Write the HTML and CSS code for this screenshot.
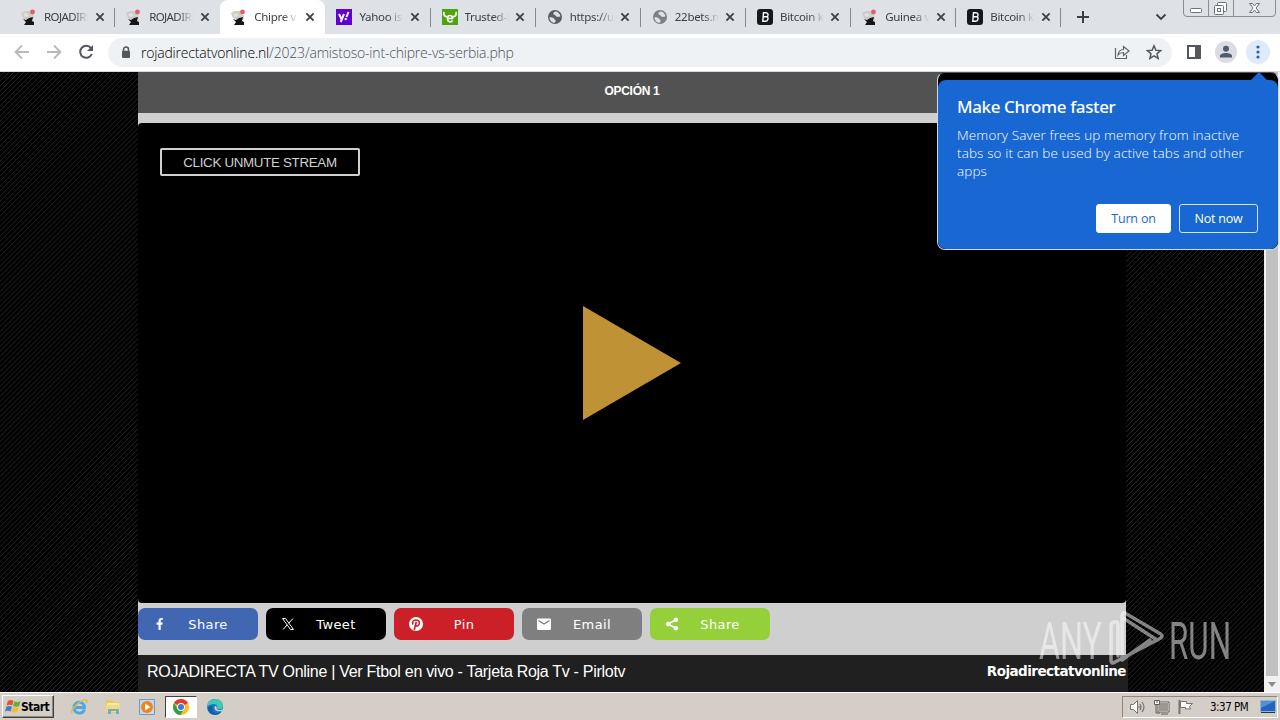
FILE: index.html
```
<!DOCTYPE html>
<html lang="en">
<head>
    <meta charset="UTF-8">
    <title>Chipre vs Serbia</title>
    <link rel="stylesheet" href="styles.css">
</head>
<body>
    <!-- Shared icons -->
    <svg class="defs" width="0" height="0">
        <symbol id="roja" viewBox="0 0 16 16">
            <path d="M0 4l4-2 6 0 2 6-5 3-5-2z" fill="#cfcac4"/>
            <path d="M2 5l4-1 2 3-4 1z" fill="#e4e0da"/>
            <path d="M9 6h4v4l-3 2-2-3z" fill="#d5d1cc"/>
            <circle cx="11.5" cy="3" r="2.4" fill="#d8636a"/>
            <path d="M2 10l3 1 3-2 4-1-1 4 2 1v3H3l2-3z" fill="#15171b"/>
        </symbol>
        <symbol id="close" viewBox="0 0 10 10">
            <path d="M1.4 1.4l7.2 7.2M8.6 1.4L1.4 8.6" stroke="#3c4046" stroke-width="1.8"/>
        </symbol>
        <symbol id="globe" viewBox="0 0 16 16">
            <circle cx="8" cy="8" r="7" fill="currentColor"/>
            <path d="M2.4 8.2c2 .2 4 .1 4.800 1.600.4 1.200 1.600.8 1.500 2.100-.1.900-1 1.300-1.500 2C4.500 13.300 2.400 11 2.400 8.200zM8 2.600c-.5 1-1.800 1-1.700 2.100.2 1.400 2 .8 2.500 2 .6 1.300 2.700 1.600 4.600.6C13 4.600 10.800 2.400 8 2.600z" fill="#dee1e6"/>
        </symbol>
        <symbol id="bitcoin" viewBox="0 0 16 16">
            <rect width="16" height="16" rx="3" fill="#17191d"/>
            <path d="M6.500 3.700h2.600c2.600 0 2.500 3.700.6 4 2.200.4 1.500 4.500-1 4.500H5.800L6.500 3.700zM6.500 7.800h3" fill="none" stroke="#fff" stroke-width="1.400"/>
        </symbol>
    </svg>

    <div class="tabstrip">
        <div class="tab"><svg class="fav"><use href="#roja"/></svg><span class="name caps">ROJADIRE</span><svg class="x"><use href="#close"/></svg></div>
        <div class="tab no-line"><svg class="fav"><use href="#roja"/></svg><span class="name caps">ROJADIRE</span><svg class="x"><use href="#close"/></svg></div>
        <div class="tab current"><svg class="fav"><use href="#roja"/></svg><span class="name">Chipre vs</span><svg class="x"><use href="#close"/></svg></div>
        <div class="tab"><svg class="fav" viewBox="0 0 16 16"><rect width="16" height="16" fill="#5f01d1"/><path d="M3 5l2.500 5M8 5l-3.300 8M12.500 3l-2 5" stroke="#fff" stroke-width="2" fill="none"/><circle cx="9.700" cy="10" r="1.200" fill="#fff"/></svg><span class="name">Yahoo is</span><svg class="x"><use href="#close"/></svg></div>
        <div class="tab"><svg class="fav" viewBox="0 0 16 16"><rect width="16" height="16" fill="#4fa30f"/><path d="M2 3c-1 3 1 5 3.500 4.500M14 3c1 3-1 5-3.500 4.500" stroke="#fff" stroke-width="1.800" fill="none"/><path d="M5.500 9.500h5c0-4-5-4-5 0 0 4 4 4 5 2" stroke="#fff" stroke-width="1.700" fill="none"/></svg><span class="name">Trusted-R</span><svg class="x"><use href="#close"/></svg></div>
        <div class="tab"><svg class="fav dark"><use href="#globe"/></svg><span class="name">https://ur</span><svg class="x"><use href="#close"/></svg></div>
        <div class="tab"><svg class="fav light"><use href="#globe"/></svg><span class="name">22bets.m</span><svg class="x"><use href="#close"/></svg></div>
        <div class="tab"><svg class="fav"><use href="#bitcoin"/></svg><span class="name">Bitcoin ka</span><svg class="x"><use href="#close"/></svg></div>
        <div class="tab"><svg class="fav"><use href="#roja"/></svg><span class="name">Guinea vs</span><svg class="x"><use href="#close"/></svg></div>
        <div class="tab"><svg class="fav"><use href="#bitcoin"/></svg><span class="name">Bitcoin ka</span><svg class="x"><use href="#close"/></svg></div>
        <svg class="plus" viewBox="0 0 14 14"><path d="M7 1v12M1 7h12" stroke="#3c4046" stroke-width="2"/></svg>
        <svg class="chevron" viewBox="0 0 12 8"><path d="M1.500 1.500L6 6l4.500-4.500" stroke="#3c4046" stroke-width="1.800" fill="none"/></svg>
        <svg class="winctl" viewBox="0 0 94 18">
            <path d="M.5 0v13q0 3.500 3.500 3.500h85q3.500 0 3.500-3.500V0M25.500 0v16M50.500 0v16" fill="none" stroke="#898d94"/>
            <g fill="#fff" stroke="#6b6f76"><rect x="7.500" y="8.500" width="11" height="4" rx="1"/><rect x="34.500" y="2.500" width="9" height="9" rx="1"/><rect x="31.500" y="5.500" width="9" height="9" rx="1"/><rect x="34.500" y="8.500" width="3" height="3"/>
            <path d="M66.500 3.500h3l2 2.500 2-2.500h3l-3.500 4.500 3.500 4.500h-3l-2-2.500-2 2.500h-3l3.500-4.500z"/></g>
        </svg>
    </div>

    <div class="toolbar">
        <svg class="arrow" viewBox="0 0 16 16"><path d="M15 8H2M8 1.500L1.500 8 8 14.500" fill="none" stroke="#b6b9bd" stroke-width="1.800"/></svg>
        <svg class="arrow" viewBox="0 0 16 16"><path d="M1 8h13M8 1.500L14.500 8 8 14.500" fill="none" stroke="#b6b9bd" stroke-width="1.800"/></svg>
        <svg class="arrow" viewBox="0 0 16 16"><path d="M13 4.200A6 6 0 1 0 13.800 10" fill="none" stroke="#54585d" stroke-width="2"/><path d="M15 1v6H9z" fill="#54585d"/></svg>
        <div class="omnibox">
            <svg class="lock" viewBox="0 0 10 13"><path d="M2.500 5V3.500a2.500 2.500 0 0 1 5 0V5" fill="none" stroke="#54585d" stroke-width="1.500"/><rect x="1" y="4.700" width="8" height="7.300" rx="1" fill="#54585d"/></svg>
            <span class="url"><b>rojadirectatvonline.nl</b>/2023/amistoso-int-chipre-vs-serbia.php</span>
            <svg class="share-ico" viewBox="0 0 16 16"><path d="M1.500 4v10.500h11V11M4 11c.5-4 2.500-5.500 5.500-5.500v-3L15 7l-5.500 4.500V8.500C7 8.500 5.500 9 4 11z" fill="none" stroke="#5f6368" stroke-width="1.200"/></svg>
            <svg class="star" viewBox="0 0 16 16"><path d="M8 1.800l1.900 4.400 4.700.4-3.600 3.100 1.100 4.700L8 11.900l-4.100 2.500L5 9.700 1.400 6.600l4.700-.4z" fill="none" stroke="#54585d" stroke-width="1.500"/></svg>
        </div>
        <svg class="panel" viewBox="0 0 14 14"><path d="M0 0h14v14H0zM2 2v10h6V2z" fill="#54585d" fill-rule="evenodd"/></svg>
        <svg class="round" viewBox="0 0 22 22"><circle cx="11" cy="11" r="11" fill="#dadce0"/><circle cx="11" cy="7.800" r="3" fill="#505a70"/><path d="M5 16.500v-1.500c0-4 12-4 12 0v1.500z" fill="#505a70"/></svg>
        <svg class="menu" viewBox="0 0 24 24"><circle cx="12" cy="12" r="12" fill="#dfebfb"/><g fill="#2862b8"><circle cx="12" cy="7" r="1.600"/><circle cx="12" cy="12" r="1.600"/><circle cx="12" cy="17" r="1.600"/></g></svg>
    </div>

    <div class="viewport">
        <div class="site">
            <div class="options">OPCIÓN 1</div>
            <div class="player">
                <button class="unmute">CLICK UNMUTE STREAM</button>
                <svg class="play" viewBox="0 0 98 114"><path d="M0 0l98 57-98 57z" fill="#bf9235"/></svg>
            </div>
            <div class="share">
                <a class="btn facebook"><svg viewBox="0 0 16 16"><path d="M6.500 14V8.800H4.600V6.500h1.900V5c0-2.200 1.200-3.200 4.200-2.900v2H9.500c-.8 0-.8.400-.8 1v1.400h2L10.400 8.800H8.700V14z"/></svg><span>Share</span></a>
                <a class="btn twitter"><svg viewBox="0 0 16 16"><path d="M2.500 2.500h3l8 11h-3zM13 2.500L8.700 7.200M7.200 8.900L3 13.500" fill="none" stroke="#fff"/></svg><span>Tweet</span></a>
                <a class="btn pinterest"><svg viewBox="0 0 16 16"><circle cx="8" cy="8" r="7"/><path d="M4.800 8.500C3.300 3 11.500 2.700 11.400 7c-.1 3-2.700 3.900-3.700 2.400M8.300 5.800L6.200 14" fill="none" stroke="#cc2029" stroke-width="1.600"/></svg><span>Pin</span></a>
                <a class="btn email"><svg viewBox="0 0 16 16"><rect x="1" y="2.500" width="14" height="11.500" rx="1.200"/><path d="M2.500 4.500L8 8l5.500-3.500" fill="none" stroke="#7f7f7f" stroke-width="1.400"/></svg><span>Email</span></a>
                <a class="btn sharethis"><svg viewBox="0 0 16 16"><path d="M12 3.800L4 8l8 4.200" fill="none" stroke="#fff" stroke-width="1.600"/><circle cx="12" cy="3.800" r="2.200"/><circle cx="4" cy="8" r="2.200"/><circle cx="12" cy="12.200" r="2.200"/></svg><span>Share</span></a>
            </div>
            <div class="footer">
                <span class="tagline">ROJADIRECTA TV Online | Ver Ftbol en vivo - Tarjeta Roja Tv - Pirlotv</span>
                <span class="brand">Rojadirectatvonline</span>
            </div>
        </div>
        <div class="scrollbar"><div class="thumb"></div><div class="down"></div></div>

        <svg class="watermark" viewBox="0 0 200 64">
            <g fill="#fff" font-family="Roboto" font-size="52">
                <text x="4" y="53" textLength="63" lengthAdjust="spacingAndGlyphs">ANY</text>
                <text x="134" y="53" textLength="62" lengthAdjust="spacingAndGlyphs">RUN</text>
            </g>
            <path d="M83 50V18q0-3-4-2-3 1-3 4v34q0 5 4 2l44-23q6-3 0-6L90 7q-3-1-3 3v44M88 12l34 22M87 54l28-20" fill="none" stroke="#fff" stroke-width="3.500" stroke-linecap="round"/>
        </svg>

        <div class="popup">
            <div class="bubble">
                <h1>Make Chrome faster</h1>
                <p>Memory Saver frees up memory from inactive<br>tabs so it can be used by active tabs and other<br>apps</p>
                <div class="actions">
                    <button class="on">Turn on</button>
                    <button class="not-now">Not now</button>
                </div>
            </div>
        </div>
    </div>

    <div class="taskbar">
        <div class="start">
            <svg viewBox="0 0 16 16"><path d="M2 2q3-2 6 0L6.500 7q-3-1.500-6 0z" fill="#e2532b"/><path d="M9 2.500q3 1.500 6.500 0L14 7.500q-3 1.500-6.500 0z" fill="#65ad3b"/><path d="M.4 8.200q3-1.500 6 0l-1.500 5q-3-1.500-6 0z" fill="#3e7ed0"/><path d="M7.300 8.700q3 1.500 6.500 0l-1.500 5q-3 1.500-6.500 0z" fill="#f4bd28"/></svg>
            <span>Start</span>
        </div>
        <svg class="app" viewBox="0 0 18 18"><path d="M14.500 11.500C12.500 17 4 16 4 9.500 4 2.500 14.500 2.500 14.500 9.500H5" fill="none" stroke="#48a9e4" stroke-width="2.800"/><path d="M2 15.500c-3-3 9-14.500 14-13.500 1.500.4 1 2 .4 3" fill="none" stroke="#e5b63e" stroke-width="1.400"/></svg>
        <svg class="app" viewBox="0 0 18 18"><path d="M2 4V2h6l1 2h6v11H2z" fill="#e9c95d"/><path d="M3 5h12v8H3z" fill="#faebac"/><path d="M2 7h14v7H2z" fill="#f4da7c"/><path d="M4 16v-5h11v5h-3v-3H7v3z" fill="#66afd7"/></svg>
        <svg class="app" viewBox="0 0 18 18"><path d="M1.500 1.500h15v15h-15z" fill="#c2d9ec" stroke="#6b9dc7"/><circle cx="9" cy="9" r="6" fill="#ef8519"/><path d="M7 5.500L12.500 9 7 12.500z" fill="#fff"/></svg>
        <div class="running">
            <svg viewBox="0 0 16 16"><circle cx="8" cy="8" r="8" fill="#fbc116"/><path d="M8 8L1.100 4A8 8 0 0 1 14.900 4z" fill="#df3b30"/><path d="M8 8L4.500 10 1.100 4A8 8 0 0 0 7.500 16l3.300-6z" fill="#2f9e4e"/><circle cx="8" cy="8" r="3.900" fill="#fff"/><circle cx="8" cy="8" r="3" fill="#3b79e1"/></svg>
        </div>
        <svg class="app edge" viewBox="0 0 18 18"><circle cx="9" cy="9" r="8" fill="#1976c9"/><path d="M1 9C1-1 17-2 17 8c0 4-6 4-6 2 2-4-5-6-10-1z" fill="#40c9b4"/><path d="M7 9c-2 4 2 8 8 5-3 4-12 4-13-3 0-3 4-4 5-2z" fill="#125ca9"/><path d="M9 8c2 0 2 1 1.500 2 .5 3 5 2 6 1l-.5 2c-5 1-9-1-7-5z" fill="#d6d0c8"/></svg>
        <div class="tray">
            <svg class="t-vol" viewBox="0 0 18 16"><path d="M1.500 5.500h3l4-4v13l-4-4h-3z" fill="#fff" stroke="#77736d"/><path d="M11 5q2 3 0 6M13 3q4 5 0 10M10 7v2" fill="none" stroke="#77736d" stroke-width="1.200"/></svg>
            <svg class="t-net" viewBox="0 0 18 16"><path d="M5.500 3.500h10v9h-10z" fill="#9b9892" stroke="#fff"/><path d="M5 3h11v10H5zM8 15h7M3 6v8h4" fill="none" stroke="#5f5c56"/><path d="M1.500 1.500h5v4h-5zM4 1v3" fill="#fff" stroke="#5f5c56"/></svg>
            <svg class="t-flag" viewBox="0 0 18 16"><path d="M2.500 1v14" stroke="#77736d" stroke-width="2"/><path d="M3.500 2.500h6v2h6l-3 3 1 2.500H8.500V8.500h-5z" fill="#fff" stroke="#77736d"/></svg>
            <span>3:37 PM</span>
            <svg class="t-desk" viewBox="0 0 16 14"><path d="M.5.500h15v11H.5z" fill="#2465b8" stroke="#8bb6dc"/><path d="M1 1h14L1 8z" fill="#4f91d6"/><path d="M1 12h14v1H1z" fill="#28354b"/></svg>
        </div>
    </div>
</body>
</html>
```
FILE: styles.css
```
* {
    margin: 0;
    padding: 0;
    box-sizing: border-box;
}

body {
    display: flex;
    flex-direction: column;
    width: 1280px;
    height: 720px;
    overflow: hidden;
    font-family: "Noto Sans", "Open Sans", sans-serif;
}

svg {
    flex: none;
    display: block;
}

.defs {
    position: absolute;
}

/* Tabs */
.tabstrip {
    display: flex;
    height: 34px;
    padding-left: 10px;
    background: #dee1e6;
}

.tab {
    position: relative;
    display: flex;
    align-items: center;
    width: 105.15px;
    height: 34px;
    padding-left: 11px;
    flex: none;
}

.tab::after {
    content: "";
    position: absolute;
    right: 0;
    top: 8px;
    width: 1px;
    height: 19px;
    background: #868a90;
}

.no-line::after,
.current::after {
    display: none;
}

.current {
    background: #fff;
    border-radius: 8px 8px 0 0;
}

.fav {
    width: 16px;
    height: 16px;
}

.dark {
    color: #5b5f65;
}

.light {
    color: #7d8085;
}

.name {
    width: 44px;
    margin: -2px 0 0 7px;
    overflow: hidden;
    white-space: nowrap;
    font-size: 11.5px;
    letter-spacing: -0.3px;
    color: #3c4046;
    -webkit-mask-image: linear-gradient(to right, #000 65%, transparent);
    mask-image: linear-gradient(to right, #000 65%, transparent);
}

.caps {
    letter-spacing: -0.6px;
}

.x {
    width: 10px;
    height: 10px;
    margin-left: 6.5px;
}

.plus {
    width: 14px;
    height: 14px;
    margin: 10px 0 0 14.5px;
}

.chevron {
    width: 12px;
    height: 8px;
    margin: 13px 0 0 65px;
}

.winctl {
    width: 94px;
    height: 18px;
    margin-left: 16px;
}

/* Toolbar */
.toolbar {
    display: flex;
    align-items: center;
    height: 38px;
    padding: 0 9px 1px 14px;
    border-bottom: 1px solid #d5d7da;
    background: #fff;
}

.arrow {
    width: 16px;
    height: 16px;
    margin-right: 16px;
}

.omnibox {
    display: flex;
    align-items: center;
    width: 1064px;
    height: 29px;
    margin-left: -2px;
    padding: 0 10px 0 13px;
    border-radius: 15px;
    background: #eff2f5;
}

.lock {
    width: 10px;
    height: 13px;
}

.url {
    flex: 1;
    margin-left: 10px;
    font-family: "Open Sans", "Noto Sans", sans-serif;
    font-size: 14px;
    font-weight: 300;
    letter-spacing: -0.19px;
    color: #4c5055;
    white-space: nowrap;
}

.url b {
    font-weight: 300;
    color: #000;
}

.share-ico {
    width: 16px;
    height: 16px;
    margin-right: 16px;
}

.star {
    width: 16px;
    height: 16px;
}

.panel {
    width: 14px;
    height: 14px;
    margin-left: 15px;
}

.round {
    width: 22px;
    height: 22px;
    margin-left: 14px;
}

.menu {
    width: 24px;
    height: 24px;
    margin-left: 9px;
}

/* Page */
.viewport {
    position: relative;
    display: flex;
    height: 620px;
    padding-left: 138px;
    background: repeating-linear-gradient(135deg, #000 0, #000 2.3px, #2a2a2a 2.9px, #000 3.54px);
}

.site {
    display: flex;
    flex-direction: column;
    width: 988px;
    background: #cfcfcf;
}

.options {
    height: 41px;
    margin-bottom: 10px;
    background: #525252;
    color: #fff;
    font: bold 12px/38px "Liberation Sans", sans-serif;
    letter-spacing: -0.3px;
    text-align: center;
}

.player {
    display: flex;
    flex-direction: column;
    height: 480px;
    padding: 25px 22px;
    border-radius: 4px;
    background: #000;
}

.unmute {
    width: 200px;
    height: 28px;
    border: 2px solid #d0d0d0;
    border-radius: 2px;
    background: #000;
    color: #d0d0d0;
    font: 13.333px "Liberation Sans", sans-serif;
    letter-spacing: -0.3px;
}

.play {
    width: 98px;
    height: 114px;
    margin: 130px 0 0 423px;
}

.share {
    display: flex;
    gap: 8px;
    height: 52px;
    padding-top: 5px;
}

.btn {
    display: flex;
    align-items: center;
    width: 120px;
    height: 32px;
    padding: 0 10px 0 14px;
    border-radius: 7px;
    color: #fff;
    font: 13px/32px "DejaVu Sans", sans-serif;
    letter-spacing: 0.4px;
}

.btn svg {
    width: 16px;
    height: 16px;
    fill: #fff;
}

.btn span {
    flex: 1;
    padding-top: 2px;
    text-align: center;
}

.facebook { background: #4267b2; }
.twitter { background: #000; }
.pinterest { background: #cc2029; }
.email { background: #7f7f7f; }
.sharethis { background: #95d03a; }

.footer {
    display: flex;
    justify-content: space-between;
    width: 990px;
    height: 37px;
    padding: 0 2px 0 9px;
    background: #202020;
    color: #fff;
    line-height: 33px;
}

.tagline {
    font-family: "Liberation Sans", sans-serif;
    font-size: 16px;
    letter-spacing: -0.29px;
}

.brand {
    font-family: "DejaVu Sans", sans-serif;
    font-size: 13.5px;
    font-weight: bold;
    letter-spacing: -0.53px;
}

.scrollbar {
    width: 16px;
    height: 620px;
    margin-left: 138px;
    padding-left: 2px;
    background: #f1f1f1;
}

.thumb {
    width: 12px;
    height: 604px;
    background: #c1c1c1;
}

.down {
    width: 0;
    margin: 6px 0 0 2px;
    border: 4px solid transparent;
    border-top: 5px solid #8b8b8b;
}

.watermark {
    position: absolute;
    left: 1035px;
    top: 534px;
    width: 200px;
    height: 64px;
    opacity: 0.5;
}

/* Memory saver popup */
.popup {
    position: absolute;
    left: 937px;
    top: 0;
    width: 342px;
    height: 178px;
    padding-top: 7px;
    border: 1px solid #c9d9e8;
    border-top-color: #555;
    border-radius: 8px;
    background: #000;
}

.popup::before {
    content: "";
    position: absolute;
    left: 313px;
    top: -1px;
    border: 8px solid transparent;
    border-top: 0;
    border-bottom-color: #1967d2;
}

.bubble {
    height: 169px;
    padding: 17px 20px 0 19px;
    border-radius: 8px;
    background: #1967d2;
    color: #fff;
}

.bubble h1 {
    font-size: 17px;
    font-weight: 500;
    line-height: 20px;
    letter-spacing: -0.4px;
}

.bubble p {
    margin-top: 9px;
    font-family: "Open Sans", "Noto Sans", sans-serif;
    font-size: 13.5px;
    font-weight: 300;
    line-height: 18px;
    letter-spacing: 0.13px;
    white-space: nowrap;
}

.actions {
    display: flex;
    justify-content: flex-end;
    gap: 8px;
    margin-top: 24px;
}

.actions button {
    height: 29px;
    border: 1px solid #d4e3f8;
    border-radius: 3px;
    font: 12.5px "Open Sans", "Noto Sans", sans-serif;
    letter-spacing: -0.2px;
}

.actions .on {
    width: 75px;
    border-color: #fff;
    background: #fff;
    color: #1967d2;
}

.not-now {
    width: 79px;
    background: transparent;
    color: #fff;
}

/* Taskbar */
.taskbar {
    display: flex;
    height: 28px;
    padding: 2px 2px 1px 2px;
    border-top: 1px solid #fff;
    background: #d5cec6;
}

.start {
    display: flex;
    align-items: center;
    width: 52px;
    height: 23px;
    padding-left: 3px;
    border: 1px solid #fff;
    border-right-color: #404040;
    border-bottom-color: #404040;
    box-shadow: inset -1px -1px #8c8780;
    font: bold 12px "DejaVu Sans Condensed", sans-serif;
    letter-spacing: -0.5px;
}

.start svg {
    width: 15px;
    height: 15px;
    overflow: visible;
}

.app {
    width: 18px;
    height: 18px;
    margin: 3px 0 0 16px;
}

.running {
    display: flex;
    align-items: center;
    justify-content: center;
    width: 32px;
    height: 22px;
    margin: 1px 0 0 9px;
    border: 1px solid #fff;
    border-top-color: #404040;
    border-left-color: #404040;
    background: #fff;
}

.running svg {
    width: 16px;
    height: 16px;
}

.edge {
    margin-left: 9px;
}

.tray {
    display: flex;
    align-items: center;
    width: 156px;
    height: 22px;
    margin: 1px 0 0 auto;
    padding-left: 6px;
    border: 1px solid #fff;
    border-top-color: #8c8780;
    border-left-color: #8c8780;
}

.tray svg {
    width: 18px;
    height: 16px;
    margin-right: 6px;
}

.tray span {
    width: 50px;
    margin-left: 9px;
    font: 11.5px "DejaVu Sans Condensed", sans-serif;
    letter-spacing: -0.5px;
    white-space: nowrap;
}

.tray .t-desk {
    width: 16px;
    height: 14px;
    margin-right: 0;
}
```
